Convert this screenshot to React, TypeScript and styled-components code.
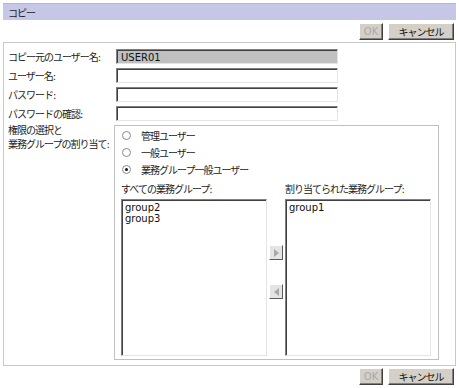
import React from 'react';
import styled, { createGlobalStyle } from 'styled-components';

const Global = createGlobalStyle`
  html, body { margin: 0; padding: 0; background: #fff; }
  body {
    font-family: "DejaVu Sans", "Noto Sans CJK JP", sans-serif;
    font-size: 10px;
    color: #222;
  }
`;

const Page = styled.div`
  width: 453px;
  padding: 3px 0 0 3px;
  display: flex;
  flex-direction: column;
`;

const TitleBar = styled.div`
  height: 17px;
  box-sizing: border-box;
  background: #c6c6e6;
  border-top: 1px solid #b4b4d6;
  padding-left: 5px;
  display: flex;
  align-items: center;
  color: #222;
  letter-spacing: -1px;
`;

const ButtonBar = styled.div<{ $top?: boolean }>`
  display: flex;
  justify-content: flex-end;
  gap: 5px;
  padding-right: 2px;
  margin: ${p => (p.$top ? '3px 0 2px' : '2px 0 0')};
`;

const Button = styled.button<{ $wide?: boolean }>`
  height: 17px;
  width: ${p => (p.$wide ? '66px' : '24px')};
  box-sizing: border-box;
  padding: 0;
  background: #d4d0c8;
  border: 1px solid;
  border-color: #fff #404040 #404040 #fff;
  box-shadow: inset -1px -1px #808080;
  font-family: inherit;
  font-size: 10px;
  letter-spacing: ${p => (p.$wide ? '-1px' : '0')};
  color: ${p => (p.disabled ? '#a8a8a8' : '#111')};
`;

const Panel = styled.div`
  border: 1px solid #c8c8c8;
  padding: 6px 0 5px 4px;
  display: flex;
  flex-direction: column;
  gap: 4px;
`;

const FormRow = styled.div`
  display: flex;
  align-items: center;
  height: 15px;
`;

const Label = styled.div`
  width: 108px;
  flex: none;
  white-space: nowrap;
  letter-spacing: -1px;
`;

const TextInput = styled.div<{ $disabled?: boolean }>`
  width: 222px;
  height: 15px;
  box-sizing: border-box;
  border: 1px solid;
  border-color: #808080 #e4e4e4 #e4e4e4 #808080;
  box-shadow: inset 1px 1px #404040;
  background: ${p => (p.$disabled ? '#c0c0c0' : '#fff')};
  padding: 2px 0 0 4px;
  font-size: 10px;
  line-height: 11px;
  color: #111;
`;

const GroupRow = styled.div`
  display: flex;
  align-items: flex-start;
`;

const GroupLabel = styled.div`
  width: 106px;
  flex: none;
  line-height: 14px;
  white-space: nowrap;
  margin-top: -1px;
  letter-spacing: -1px;
`;

const GroupBox = styled.div`
  width: 325px;
  box-sizing: border-box;
  border: 1px solid #c0c0c0;
  padding: 1px 8px 3px 6px;
  display: flex;
  flex-direction: column;
`;

const RadioRow = styled.div`
  display: flex;
  align-items: center;
  height: 17px;
  gap: 10px;
  padding-left: 1px;
  letter-spacing: -1px;
`;

const RadioDot = styled.span<{ $checked?: boolean }>`
  width: 9px;
  height: 9px;
  box-sizing: border-box;
  border-radius: 50%;
  border: 1px solid #8a8a8a;
  background: #fff;
  display: flex;
  align-items: center;
  justify-content: center;
  &::after {
    content: '';
    display: ${p => (p.$checked ? 'block' : 'none')};
    width: 3px;
    height: 3px;
    border-radius: 50%;
    background: #111;
  }
`;

const ListGrid = styled.div`
  margin-top: 5px;
  display: grid;
  grid-template-columns: 146px 14px 146px;
  grid-template-rows: 16px 157px;
  column-gap: 2px;
`;

const ListCaption = styled.div<{ $col: number }>`
  grid-column: ${p => p.$col};
  grid-row: 1;
  white-space: nowrap;
  line-height: 14px;
  letter-spacing: -1px;
`;

const ListBox = styled.div<{ $col: number }>`
  grid-column: ${p => p.$col};
  grid-row: 2;
  box-sizing: border-box;
  border: 1px solid;
  border-color: #808080 #e4e4e4 #e4e4e4 #808080;
  box-shadow: inset 1px 1px #404040;
  background: #fff;
  padding: 3px 3px;
  line-height: 10.5px;
  color: #111;
`;

const ArrowColumn = styled.div`
  grid-column: 2;
  grid-row: 2;
  display: flex;
  flex-direction: column;
  gap: 24px;
  padding-top: 46px;
`;

const ArrowButton = styled.div`
  width: 14px;
  height: 15px;
  box-sizing: border-box;
  background: #e4e4e4;
  border: 1px solid;
  border-color: #fff #5a5a5a #5a5a5a #fff;
  display: flex;
  align-items: center;
  justify-content: center;
`;

const Arrow = ({ dir }: { dir: 'right' | 'left' }) => (
  <svg width="5" height="8" viewBox="0 0 5 8">
    {dir === 'right' ? (
      <polygon points="0,0 5,4 0,8" fill="#a8a8a8" />
    ) : (
      <polygon points="5,0 0,4 5,8" fill="#a8a8a8" />
    )}
  </svg>
);

export default function App() {
  return (
    <>
      <Global />
      <Page>
        <TitleBar>コピー</TitleBar>
        <ButtonBar $top>
          <Button disabled>OK</Button>
          <Button $wide>キャンセル</Button>
        </ButtonBar>
        <Panel>
          <FormRow>
            <Label>コピー元のユーザー名:</Label>
            <TextInput $disabled>USER01</TextInput>
          </FormRow>
          <FormRow>
            <Label>ユーザー名:</Label>
            <TextInput />
          </FormRow>
          <FormRow>
            <Label>パスワード:</Label>
            <TextInput />
          </FormRow>
          <FormRow>
            <Label>パスワードの確認:</Label>
            <TextInput />
          </FormRow>
          <GroupRow>
            <GroupLabel>
              権限の選択と
              <br />
              業務グループの割り当て:
            </GroupLabel>
            <GroupBox>
              <RadioRow>
                <RadioDot />
                管理ユーザー
              </RadioRow>
              <RadioRow>
                <RadioDot />
                一般ユーザー
              </RadioRow>
              <RadioRow>
                <RadioDot $checked />
                業務グループ一般ユーザー
              </RadioRow>
              <ListGrid>
                <ListCaption $col={1}>すべての業務グループ:</ListCaption>
                <ListCaption $col={3}>割り当てられた業務グループ:</ListCaption>
                <ListBox $col={1}>
                  <div>group2</div>
                  <div>group3</div>
                </ListBox>
                <ArrowColumn>
                  <ArrowButton>
                    <Arrow dir="right" />
                  </ArrowButton>
                  <ArrowButton>
                    <Arrow dir="left" />
                  </ArrowButton>
                </ArrowColumn>
                <ListBox $col={3}>
                  <div>group1</div>
                </ListBox>
              </ListGrid>
            </GroupBox>
          </GroupRow>
        </Panel>
        <ButtonBar>
          <Button disabled>OK</Button>
          <Button $wide>キャンセル</Button>
        </ButtonBar>
      </Page>
    </>
  );
}
